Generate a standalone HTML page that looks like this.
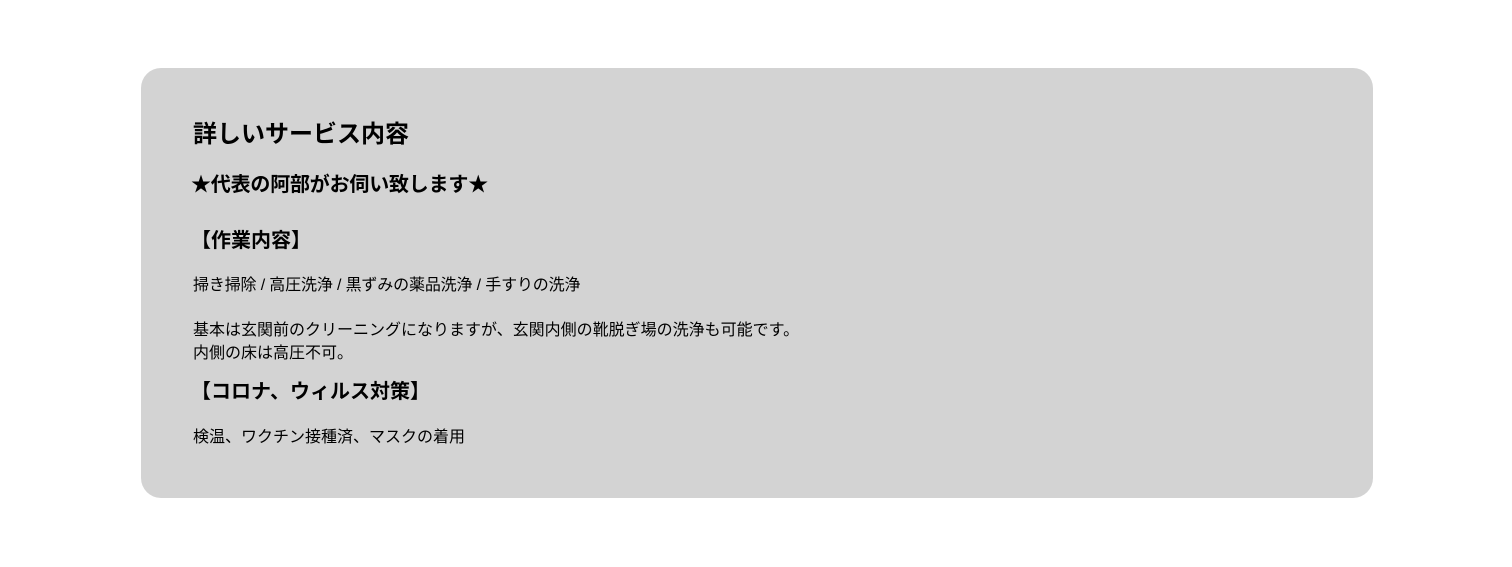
<!DOCTYPE html>
<html><head><meta charset="utf-8"><style>
body{margin:0;background:#fff;font-family:"Liberation Sans","Noto Sans CJK JP",sans-serif;color:#000}
.card{position:absolute;left:141px;top:68px;width:1232px;height:430px;background:#d3d3d3;border-radius:20px}
.t{position:absolute;left:52px;white-space:nowrap;line-height:1}
</style></head><body>
<div class="card">
<div class="t" style="top:55px;font-size:24px;font-weight:bold">詳しいサービス内容</div>
<div class="t" style="left:50px;top:107px;font-size:20px;font-weight:bold;letter-spacing:-0.2px">★代表の阿部がお伺い致します★</div>
<div class="t" style="left:50px;top:163px;font-size:20px;font-weight:bold">【作業内容】</div>
<div class="t" style="top:210px;font-size:16px;letter-spacing:-0.15px">掃き掃除 / 高圧洗浄 / 黒ずみの薬品洗浄 / 手すりの洗浄</div>
<div class="t" style="top:251px;font-size:16px;line-height:23px">基本は玄関前のクリーニングになりますが、玄関内側の靴脱ぎ場の洗浄も可能です。<br>内側の床は高圧不可。</div>
<div class="t" style="left:50px;top:314px;font-size:20px;font-weight:bold">【コロナ、ウィルス対策】</div>
<div class="t" style="top:362px;font-size:16px">検温、ワクチン接種済、マスクの着用</div>
</div>
</body></html>
